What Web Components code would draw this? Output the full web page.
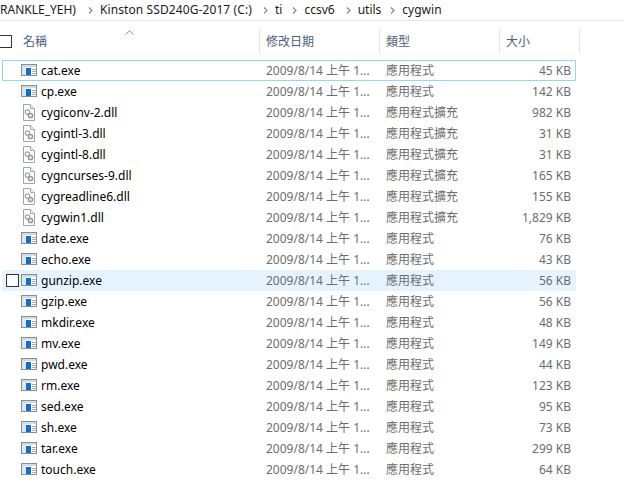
<!DOCTYPE html>
<html>
<head>
<meta charset="utf-8">
<style>
  html, body { margin: 0; background: #fff; }
  body { width: 624px; height: 500px; overflow: hidden; font: 12px/16px "Noto Sans", "Noto Sans CJK TC", sans-serif; color: #000; }
</style>
</head>
<body>
<explorer-window></explorer-window>
<script>
var chevron = '<svg width="5" height="7" viewBox="0 0 5 7"><path d="M1 .5 4 3.5 1 6.5" fill="none" stroke="#8a8a8a" stroke-width="1.2"/></svg>';

class AddressBar extends HTMLElement {
  constructor() {
    super();
    var shadow = this.attachShadow({mode: 'open'});
    var parts = ['RANKLE_YEH)', 'Kinston SSD240G-2017 (C:)', 'ti', 'ccsv6', 'utils', 'cygwin'];
    shadow.innerHTML = '<style>' +
      ':host { display: flex; height: 20px; border-bottom: 1px solid #e5e5e5; overflow: hidden; align-items: center; white-space: nowrap; color: #1a1a1a; }' +
      '.crumb:nth-of-type(2) { letter-spacing: .1px; }' +
      'svg { margin: 0 7px 0 11px; flex: none; }' +
      'svg:nth-of-type(1) { margin-left: 12px; }' +
      'svg:nth-of-type(3) { margin-left: 10px; }' +
      'svg:nth-of-type(5) { margin-left: 9px; }' +
      '</style>' +
      parts.map(p => '<span class="crumb">' + p + '</span>').join(chevron);
  }
}

class ListHeader extends HTMLElement {
  constructor() {
    super();
    var shadow = this.attachShadow({mode: 'open'});
    shadow.innerHTML = '<style>' +
      ':host { display: grid; grid-template-columns: 260px 120px 120px 80px; height: 25px; margin: 8px 0 0 0; position: relative; width: 580px; color: #4c607a; }' +
      '.col { display: flex; align-items: center; padding-left: 6px; border-right: 1px solid #e5e5e5; box-sizing: border-box; }' +
      '.first { padding-left: 23px; }' +
      '.box { position: absolute; left: 0; top: 6px; width: 11px; height: 11px; border: 1px solid #333; border-left: 0; }' +
      '.sort { position: absolute; left: 125px; top: 1px; }' +
      '</style>' +
      '<span class="box"></span>' +
      '<svg class="sort" width="9" height="5" viewBox="0 0 9 5"><path d="M.5 4.5 4.5 .8 8.5 4.5" fill="none" stroke="#8c8c8c"/></svg>' +
      '<div class="col first">名稱</div><div class="col">修改日期</div><div class="col">類型</div><div class="col">大小</div>';
  }
}

var exeIcon = '<svg width="16" height="12" viewBox="0 0 16 12">' +
  '<rect x=".5" y=".5" width="15" height="11" fill="#fff" stroke="#858f99"/>' +
  '<rect x="1" y="1" width="14" height="2" fill="#d3dbe3"/>' +
  '<rect x="1" y="3" width="4" height="8" fill="#dfe6ee"/>' +
  '<rect x="5" y="4" width="5" height="7" fill="#0f6fd0"/>' +
  '<path d="M11 5.5h4M11 7.5h4M11 9.5h4" stroke="#a3adb7"/></svg>';
var dllIcon = '<svg width="14" height="17" viewBox="0 0 14 17">' +
  '<path d="M1.5 .5h7l4 4v12h-11z" fill="#fff" stroke="#a2a6ab"/>' +
  '<path d="M8.5 .5v4h4" fill="#f3f3f3" stroke="#a2a6ab"/>' +
  '<circle cx="5.5" cy="8" r="2.2" fill="none" stroke="#a0a7ae" stroke-width="1.3"/>' +
  '<circle cx="8.5" cy="11.5" r="2.2" fill="#dde2e6" stroke="#8d97a1" stroke-width="1.3"/></svg>';

class FileRow extends HTMLElement {
  constructor() {
    super();
    var shadow = this.attachShadow({mode: 'open'});
    shadow.innerHTML = '<style>' +
      ':host { display: grid; grid-template-columns: 258px 120px 120px 71px; width: 574px; height: 21px; margin-left: 2px; box-sizing: border-box; align-items: center; color: #6d6d6d; white-space: nowrap; position: relative; }' +
      ':host([focused]) { outline: 1px solid #99d1ff; outline-offset: -1px; }' +
      ':host([hovered]) { background: #e5f3ff; }' +
      '.name { display: flex; align-items: center; padding-left: 19px; color: #000; }' +
      '.ico { width: 16px; height: 16px; display: flex; align-items: center; justify-content: center; margin: 0 4px 1px 0; }' +
      '.date { padding-left: 6px; }' +
      '.type { padding-left: 6px; }' +
      '.size { text-align: right; }' +
      '.check { display: none; position: absolute; left: 4px; top: 4px; width: 11px; height: 11px; border: 1px solid #333; background: #fff; }' +
      ':host([hovered]) .check { display: block; }' +
      '</style>' +
      '<span class="check"></span>' +
      '<div class="name"><span class="ico"></span><slot></slot></div>' +
      '<div class="date">2009/8/14 上午 1...</div><div class="type"></div><div class="size"></div>';
  }
  connectedCallback() {
    var dll = this.getAttribute('kind') == 'dll';
    this.shadowRoot.querySelector('.ico').innerHTML = dll ? dllIcon : exeIcon;
    this.shadowRoot.querySelector('.type').textContent = dll ? '應用程式擴充' : '應用程式';
    this.shadowRoot.querySelector('.size').textContent = this.getAttribute('size');
  }
}

class ExplorerWindow extends HTMLElement {
  constructor() {
    super();
    var shadow = this.attachShadow({mode: 'open'});
    var files = [
      ['cat.exe', '45 KB'], ['cp.exe', '142 KB'], ['cygiconv-2.dll', '982 KB'], ['cygintl-3.dll', '31 KB'],
      ['cygintl-8.dll', '31 KB'], ['cygncurses-9.dll', '165 KB'], ['cygreadline6.dll', '155 KB'], ['cygwin1.dll', '1,829 KB'],
      ['date.exe', '76 KB'], ['echo.exe', '43 KB'], ['gunzip.exe', '56 KB'], ['gzip.exe', '56 KB'],
      ['mkdir.exe', '48 KB'], ['mv.exe', '149 KB'], ['pwd.exe', '44 KB'], ['rm.exe', '123 KB'],
      ['sed.exe', '95 KB'], ['sh.exe', '73 KB'], ['tar.exe', '299 KB'], ['touch.exe', '64 KB']
    ];
    shadow.innerHTML = '<style>:host { display: block; } .rows { margin-top: 6px; }</style>' +
      '<address-bar></address-bar><list-header></list-header><div class="rows">' +
      files.map(f => '<file-row kind="' + (f[0].endsWith('.dll') ? 'dll' : 'exe') + '" size="' + f[1] + '"' +
        (f[0] == 'cat.exe' ? ' focused' : '') + (f[0] == 'gunzip.exe' ? ' hovered' : '') + '>' + f[0] + '</file-row>').join('') +
      '</div>';
  }
}

customElements.define('address-bar', AddressBar);
customElements.define('list-header', ListHeader);
customElements.define('file-row', FileRow);
customElements.define('explorer-window', ExplorerWindow);
</script>
</body>
</html>
